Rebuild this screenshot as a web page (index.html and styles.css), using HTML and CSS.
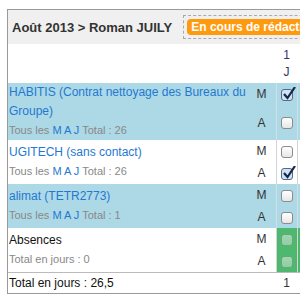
FILE: index.html
```html
<!DOCTYPE html>
<html lang="fr">
<head>
  <meta charset="UTF-8">
  <title>Feuille de temps</title>
  <link rel="stylesheet" href="styles.css">
</head>
<body>
  <div class="sheet">
    <div class="sheet-head">
      <h1>Août 2013 &gt; Roman JUILY</h1>
      <div class="status"><span class="badge">En cours de rédaction</span></div>
    </div>

    <table class="grid">
      <colgroup>
        <col class="c-name">
        <col class="c-half">
        <col class="c-day">
        <col class="c-day">
      </colgroup>
      <thead>
        <tr>
          <th colspan="2"></th>
          <th class="day">1<br>J</th>
          <th class="day"></th>
        </tr>
      </thead>
      <tbody>
        <tr class="blue">
          <td class="name" rowspan="2">
            <a href="#">HABITIS (Contrat nettoyage des Bureaux du Groupe)</a>
            <div class="sub">Tous les <a href="#">M</a> <a href="#">A</a> <a href="#">J</a> Total : 26</div>
          </td>
          <td class="half">M</td>
          <td class="box"><span class="cb checked"><svg viewBox="0 0 14 14"><path d="M2 7 L5.5 11 L13 0"/></svg></span></td>
          <td class="box"></td>
        </tr>
        <tr class="blue">
          <td class="half">A</td>
          <td class="box"><span class="cb"></span></td>
          <td class="box"></td>
        </tr>

        <tr>
          <td class="name" rowspan="2">
            <a href="#">UGITECH (sans contact)</a>
            <div class="sub">Tous les <a href="#">M</a> <a href="#">A</a> <a href="#">J</a> Total : 26</div>
          </td>
          <td class="half">M</td>
          <td class="box"><span class="cb"></span></td>
          <td class="box"></td>
        </tr>
        <tr>
          <td class="half">A</td>
          <td class="box"><span class="cb checked"><svg viewBox="0 0 14 14"><path d="M2 7 L5.5 11 L13 0"/></svg></span></td>
          <td class="box"></td>
        </tr>

        <tr class="blue">
          <td class="name" rowspan="2">
            <a href="#">alimat (TETR2773)</a>
            <div class="sub">Tous les <a href="#">M</a> <a href="#">A</a> <a href="#">J</a> Total : 1</div>
          </td>
          <td class="half">M</td>
          <td class="box"><span class="cb"></span></td>
          <td class="box"></td>
        </tr>
        <tr class="blue">
          <td class="half">A</td>
          <td class="box"><span class="cb"></span></td>
          <td class="box"></td>
        </tr>

        <tr>
          <td class="name plain" rowspan="2">
            Absences
            <div class="sub">Total en jours : 0</div>
          </td>
          <td class="half">M</td>
          <td class="box off"><span class="cb"></span></td>
          <td class="box off"></td>
        </tr>
        <tr>
          <td class="half">A</td>
          <td class="box off"><span class="cb"></span></td>
          <td class="box off"></td>
        </tr>
      </tbody>
      <tfoot>
        <tr>
          <td colspan="2">Total en jours : 26,5</td>
          <td class="day">1</td>
          <td class="day"></td>
        </tr>
      </tfoot>
    </table>
  </div>
</body>
</html>
```

FILE: styles.css
```css
html, body {
  overflow: hidden;
}

body {
  margin: 0;
  font-family: "Liberation Sans", Arial, sans-serif;
  color: #222;
}

.sheet {
  margin: 9px 0 0 7px;
  width: 340px;
  border: 1px solid #999;
}

.sheet-head {
  display: flex;
  align-items: center;
  gap: 11px;
  height: 34px;
  padding-left: 4px;
  background: #f0f0f0;
}

h1 {
  margin: 0;
  font-size: 13px;
  font-weight: bold;
  color: #333;
  white-space: nowrap;
}

.status {
  padding: 3px 6px 3px 3px;
  border: 1px dashed #aaa;
  white-space: nowrap;
}

.badge {
  display: block;
  height: 16px;
  line-height: 16px;
  padding: 0 4px;
  border-radius: 4px;
  background: #ff9a0e;
  color: white;
  font-size: 12px;
  font-weight: bold;
}

.grid {
  border-collapse: separate;
  border-spacing: 0;
  table-layout: fixed;
  width: 310px;
  font-size: 12px;
}

.c-name { width: 243px; }
.c-half { width: 25px; }
.c-day { width: 21px; }

thead th {
  height: 39px;
  padding: 0;
  font-weight: normal;
  line-height: 17px;
  color: #2e3470;
}

.day {
  text-align: center;
}

tbody td {
  padding: 0;
  vertical-align: top;
  line-height: 22px;
}

tr.blue td {
  background: #add8e6;
}

.name {
  vertical-align: middle !important;
  padding-left: 1px !important;
  line-height: 19px !important;
}

.name a, .sub a {
  color: #1f78d1;
  text-decoration: none;
}

.name.plain {
  color: #111;
}

.sub {
  font-size: 11px;
  color: #888;
}

.half {
  text-align: center;
  padding-right: 4px !important;
  color: #333;
}

.box {
  text-align: center;
  border-left: 1px solid #d4d4d4;
}

tbody tr.blue td.box {
  border-left-color: #cfe0e7;
}

tbody td.box.off {
  background: #4db86e;
}

.cb {
  display: inline-block;
  position: relative;
  width: 10px;
  height: 10px;
  border: 1px solid #8c8c8c;
  border-radius: 3px;
  background: linear-gradient(#ffffff, #e6e6e6);
  vertical-align: middle;
}

.cb.checked {
  background: #cfe2f6;
  border-color: #56688a;
}

.cb svg {
  position: absolute;
  left: 0;
  top: -3px;
  width: 14px;
  height: 14px;
  fill: none;
  stroke: #172748;
  stroke-width: 2.2;
}

.off .cb {
  opacity: 0.45;
}

tfoot td {
  height: 20px;
  padding: 0 0 0 1px;
  border-top: 1px solid #bbb;
  color: #111;
}

tfoot td.day {
  color: #333;
  padding: 0;
}
```
